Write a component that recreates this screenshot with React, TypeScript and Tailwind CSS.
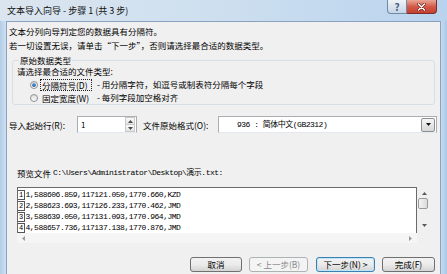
import React from "react";

const mono = "font-['Liberation_Mono','Noto_Sans_CJK_SC',monospace] text-[8px] tracking-[-0.5px]";

function Tri({ dir, color = "#3a3a3a", w = 5, h = 3 }: { dir: "up" | "down" | "left" | "right"; color?: string; w?: number; h?: number }) {
  let pts = "";
  let vb = "";
  if (dir === "up") { pts = "0,3 2.5,0 5,3"; vb = "0 0 5 3"; }
  if (dir === "down") { pts = "0,0 5,0 2.5,3"; vb = "0 0 5 3"; }
  if (dir === "left") { pts = "3,0 3,5 0,2.5"; vb = "0 0 3 5"; }
  if (dir === "right") { pts = "0,0 0,5 3,2.5"; vb = "0 0 3 5"; }
  return (
    <svg width={w} height={h} viewBox={vb} className="block">
      <polygon points={pts} fill={color} />
    </svg>
  );
}

const rows = [
  "1,588606.859,117121.050,1770.660,KZD",
  "2,588623.693,117126.233,1770.462,JMD",
  "3,588639.050,117131.093,1770.964,JMD",
  "4,588657.736,117137.138,1770.876,JMD",
];

export default function App() {
  return (
    <div className="w-[447px] h-[274px] overflow-hidden flex flex-col bg-[#c4d9ef] font-['Noto_Sans_CJK_SC',sans-serif] text-[8.5px] leading-[14px] text-black whitespace-nowrap">
      {/* Title bar */}
      <div className="h-[21px] flex items-start bg-gradient-to-r from-[#dbe5ef] via-[#cddfef] to-[#b9d3ee]">
        <div className="pl-[7px] pt-[5px] leading-[12px] text-[9px] text-[#111]">文本导入向导 - 步骤 1 (共 3 步)</div>
        <div className="ml-auto mr-[10px] flex">
          <div className="w-[20px] h-[14px] border border-t-0 border-[#7388a4] rounded-bl-[4px] bg-gradient-to-b from-[#eef3f8] to-[#c6d5e6] flex items-center justify-center text-[10px] leading-[10px] font-bold text-[#4a5d78]">?</div>
          <div className="w-[30px] h-[14px] border border-t-0 border-l-0 border-[#7a2f28] rounded-br-[4px] bg-gradient-to-b from-[#e9a696] via-[#d45a49] to-[#c43f2f] flex items-center justify-center">
            <svg width="9" height="8" viewBox="0 0 9 8">
              <path d="M1.5 1 L7.5 7 M7.5 1 L1.5 7" stroke="#5a1e18" strokeWidth="2.6" strokeLinecap="round" />
              <path d="M1.5 1 L7.5 7 M7.5 1 L1.5 7" stroke="#ffffff" strokeWidth="1.5" strokeLinecap="round" />
            </svg>
          </div>
        </div>
      </div>

      {/* Body */}
      <div className="flex flex-1 min-h-0">
        <div className="w-[6px] bg-gradient-to-r from-[#b3cde8] to-[#cfe0f1]" />
        <div className="flex-1 border border-b-0 border-[#8aa2c0] bg-[#f0f0f0] flex flex-col min-w-0">
          <div className="pt-[2px] pl-[2px]">
            <div>文本分列向导判定您的数据具有分隔符。</div>
            <div>若一切设置无误，请单击“下一步”，否则请选择最合适的数据类型。</div>
          </div>

          <fieldset className="mt-[3px] ml-[5px] mr-[5px] border border-[#d5dfe5] rounded-[3px] pl-[4px] pb-0 leading-[13px]">
            <legend className="ml-[2px] px-[1px] leading-[10px]">原始数据类型</legend>
            <div className="h-[13px]">请选择最合适的文件类型:</div>
            <div className="flex items-center h-[13px]">
              <span className="ml-[13px] w-[8px] h-[8px] rounded-full border border-[#8c8f93] bg-gradient-to-b from-[#e6e6e6] to-[#ffffff] flex items-center justify-center">
                <span className="w-[4px] h-[4px] rounded-full bg-gradient-to-b from-[#6fa3dc] to-[#1d58a8]" />
              </span>
              <span className="ml-[2px] w-[52px] h-[12px] border border-dotted border-[#222] flex items-center leading-[10px] pl-[1px]">分隔符号(D)</span>
              <span className="ml-[5px]">- 用分隔字符，如逗号或制表符分隔每个字段</span>
            </div>
            <div className="flex items-center h-[13px]">
              <span className="ml-[13px] w-[8px] h-[8px] rounded-full border border-[#8c8f93] bg-gradient-to-b from-[#dedede] to-[#fbfbfb]" />
              <span className="ml-[2px] w-[52px] h-[12px] border border-transparent flex items-center leading-[10px] pl-[1px]">固定宽度(W)</span>
              <span className="ml-[5px]">- 每列字段加空格对齐</span>
            </div>
          </fieldset>

          <div className="mt-[11px] h-[17px] flex items-center">
            <div className="w-[70px] pl-[2px]">导入起始行(R):</div>
            <div className="w-[60px] h-[17px] bg-white border border-[#abadb3] border-b-[#e3e9ef] flex items-center">
              <span className="pl-[3px] text-[8px]">1</span>
              <div className="ml-auto mr-[1px] w-[10px] h-[15px] flex flex-col">
                <div className="flex-1 border border-[#c9c9c9] bg-gradient-to-b from-[#fafafa] to-[#e4e4e4] flex items-center justify-center">
                  <Tri dir="up" color="#4d4d4d" w={5} h={3} />
                </div>
                <div className="flex-1 border border-t-0 border-[#c9c9c9] bg-gradient-to-b from-[#fafafa] to-[#e4e4e4] flex items-center justify-center">
                  <Tri dir="down" color="#4d4d4d" w={5} h={3} />
                </div>
              </div>
            </div>
            <div className="ml-[6px] w-[75px]">文件原始格式(O):</div>
            <div className="flex-1 mr-[3px] h-[17px] bg-white border border-[#abadb3] border-b-[#e3e9ef] flex items-center">
              <span className={`pl-[18px] ${mono}`}>936 : 简体中文(GB2312)</span>
              <div className="ml-auto mr-[1px] w-[14px] h-[14px] border border-[#8e8f8f] rounded-[2px] bg-gradient-to-b from-[#f6f6f6] to-[#d6d6d6] flex items-center justify-center">
                <Tri dir="down" color="#111" w={5} h={3} />
              </div>
            </div>
          </div>

          <div className="mt-[33px] pl-[10px] flex items-center h-[14px]">
            <span>预览文件</span>
            <span className={`ml-[2px] ${mono}`}>{"C:\\Users\\Administrator\\Desktop\\演示.txt:"}</span>
          </div>

          <div className="mt-[7px] ml-[10px] w-[415px] flex flex-col">
            <div className="flex">
              <div className="w-[400px] h-[46px] border-t border-l border-r border-[#6a6a6a] bg-white pt-[1px] flex flex-col">
                {rows.map((r, i) => (
                  <div key={i} className="h-[11.25px] flex items-center">
                    <span className="w-[7px] h-[10px] border-r border-t border-b border-[#555] flex items-center justify-center font-['Liberation_Mono',monospace] text-[7px] leading-[8px]">{i + 1}</span>
                    <span className={`ml-[0.5px] leading-[10px] ${mono}`}>{r}</span>
                  </div>
                ))}
              </div>
              <div className="w-[15px] h-[46px] bg-[#f0f0f0] flex flex-col items-center">
                <div className="mt-[5px]"><Tri dir="up" color="#5a5a5a" w={5} h={3} /></div>
                <div className="mt-[3px] ml-[-3px] w-[10px] h-[11px] border border-[#9a9a9a] rounded-[2px] bg-gradient-to-r from-[#f4f4f4] to-[#dcdcdc]" />
                <div className="mt-auto mb-[6px]"><Tri dir="down" color="#5a5a5a" w={5} h={3} /></div>
              </div>
            </div>
            <div className="flex">
              <div className="w-[400px] h-[10px] bg-[#f5f5f5] flex items-center justify-between px-[5px]">
                <Tri dir="left" color="#9a9a9a" w={3} h={5} />
                <Tri dir="right" color="#9a9a9a" w={3} h={5} />
              </div>
              <div className="w-[15px] h-[10px] bg-[#f0f0f0]" />
            </div>
          </div>

          <div className="mt-[14px] flex justify-end pr-[5px]">
            <div className="w-[52px] h-[15px] flex items-center justify-center rounded-[3px] border border-[#707070] bg-gradient-to-b from-[#f2f2f2] via-[#ebebeb] to-[#d4d4d4] leading-[13px]">取消</div>
            <div className="ml-[7px] w-[59px] h-[15px] flex items-center justify-center rounded-[3px] border border-[#adb2b5] bg-[#f4f4f4] text-[#8a8a8a] leading-[13px]">&lt; 上一步(B)</div>
            <div className="ml-[8px] w-[59px] h-[15px] flex items-center justify-center rounded-[3px] border border-[#3c7fb1] shadow-[inset_0_0_0_1px_#bde6fb] bg-gradient-to-b from-[#f2f2f2] via-[#ebebeb] to-[#d4d4d4] leading-[13px]">下一步(N) &gt;</div>
            <div className="ml-[7px] w-[53px] h-[15px] flex items-center justify-center rounded-[3px] border border-[#707070] bg-gradient-to-b from-[#f2f2f2] via-[#ebebeb] to-[#d4d4d4] leading-[13px]">完成(F)</div>
          </div>
        </div>
        <div className="w-[6px] bg-gradient-to-r from-[#c9dcf0] to-[#aac6e6]" />
      </div>
    </div>
  );
}
